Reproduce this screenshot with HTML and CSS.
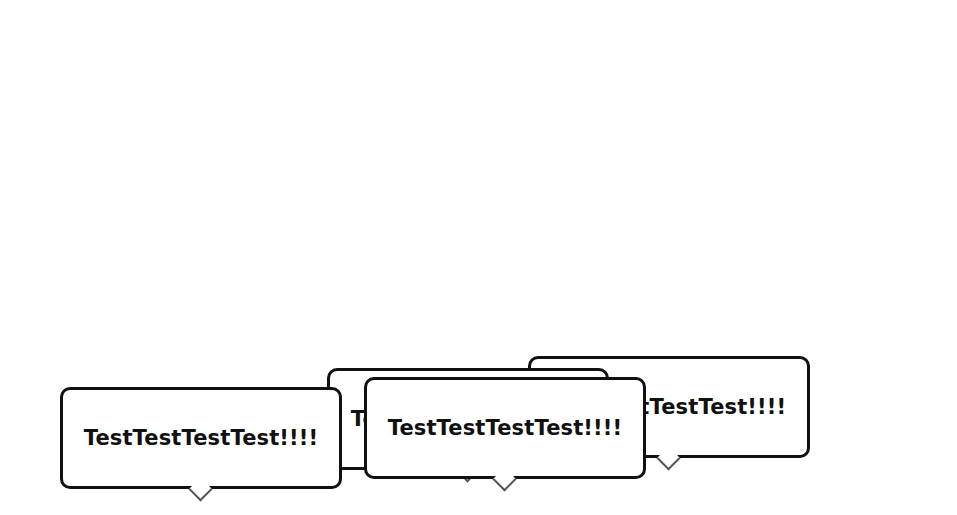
FILE: index.html
```html
<!DOCTYPE html>
<html lang="en">
<head>
    <meta charset="UTF-8">
    <meta name="viewport" content="width=device-width, initial-scale=1.0">
    <title>Bubbles</title>
    <link rel="stylesheet" href="styles.css">
</head>
<body>
    <div class="stage">
        <div class="bubble b3">TestTestTestTest!!!!</div>
        <div class="bubble b2">TestTestTestTest!!!!</div>
        <div class="bubble b1">TestTestTestTest!!!!</div>
        <div class="bubble b4">TestTestTestTest!!!!</div>
    </div>
</body>
</html>
```

FILE: styles.css
```css
body { 
    margin: 0; 
    padding: 0; 
    background-color: #fff; 
    font-family: "DejaVu Sans", sans-serif; 
}
.stage { 
    position: relative; 
    width: 957px; 
    height: 515px; 
    overflow: hidden; 
}
.bubble { 
    position: absolute; 
    width: 282px; 
    height: 102px; 
    box-sizing: border-box; 
    border: 3px solid #111; 
    border-radius: 10px; 
    background: #fff; 
    display: flex; 
    align-items: center; 
    justify-content: center; 
    font-size: 21px; 
    font-weight: bold; 
    letter-spacing: 0.15px; 
    color: #111; 
}
.bubble::after { 
    content: ""; 
    position: absolute; 
    left: 50%; 
    bottom: -12px; 
    width: 15px; 
    height: 15px; 
    margin-left: -9px; 
    background: #fff; 
    border-right: 2px solid #555; 
    border-bottom: 2px solid #555; 
    transform: rotate(45deg); 
}
.b1 { left: 60px; top: 387px; }
.b2 { left: 327px; top: 368px; }
.b3 { left: 528px; top: 356px; }
.b4 { left: 364px; top: 377px; }
```
